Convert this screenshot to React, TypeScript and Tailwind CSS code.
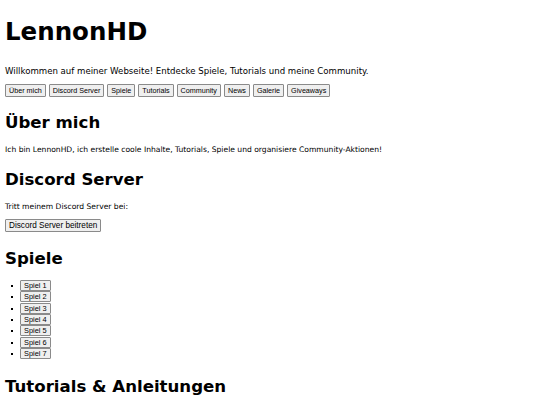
const nav = ['Über mich', 'Discord Server', 'Spiele', 'Tutorials', 'Community', 'News', 'Galerie', 'Giveaways'];
const spiele = ['Spiel 1', 'Spiel 2', 'Spiel 3', 'Spiel 4', 'Spiel 5', 'Spiel 6', 'Spiel 7'];

// browser-default button look, scaled down
const btn =
  "font-['Liberation_Sans',Arial,sans-serif] text-black bg-[#efefef] border border-[#8a8a8a] rounded-[1px] px-[3px]";

export default function App() {
  return (
    <div className="h-[405px] bg-white text-black px-[5px] pt-px font-['DejaVu_Sans',Verdana,sans-serif] overflow-hidden">
      <h1 className="text-[24.5px] leading-[29px] font-bold mt-[16px]">LennonHD</h1>
      <p className="text-[8.6px] leading-[10px] mt-[20px]">
        Willkommen auf meiner Webseite! Entdecke Spiele, Tutorials und meine Community.
      </p>
      <nav className="flex flex-wrap gap-[3px] mt-[8px]">
        {nav.map((n) => (
          <button key={n} className={`${btn} text-[7.2px] h-[13px] leading-[11px]`}>{n}</button>
        ))}
      </nav>

      <h2 className="text-[16.6px] leading-[20px] font-bold mt-[16px]">Über mich</h2>
      <p className="text-[7.6px] leading-[9px] mt-[12px]">
        Ich bin LennonHD, ich erstelle coole Inhalte, Tutorials, Spiele und organisiere Community-Aktionen!
      </p>

      <h2 className="text-[16.6px] leading-[20px] font-bold mt-[16px]">Discord Server</h2>
      <p className="text-[7.6px] leading-[9px] mt-[12px]">Tritt meinem Discord Server bei:</p>
      <button className={`${btn} text-[8.2px] h-[13px] leading-[11px] mt-[8px]`}>Discord Server beitreten</button>

      <h2 className="text-[16.6px] leading-[20px] font-bold mt-[14px]">Spiele</h2>
      <ul className="mt-[11px]">
        {spiele.map((s) => (
          <li key={s} className="h-[11.33px] flex items-start">
            <span className="w-[2px] h-[2px] bg-black ml-[6px] mr-[7px] mt-[5px]" />
            <button className={`${btn} text-[7.4px] h-[11px] leading-[9px]`}>{s}</button>
          </li>
        ))}
      </ul>

      <h2 className="text-[16.6px] leading-[20px] font-bold mt-[18px]">Tutorials &amp; Anleitungen</h2>
    </div>
  );
}
